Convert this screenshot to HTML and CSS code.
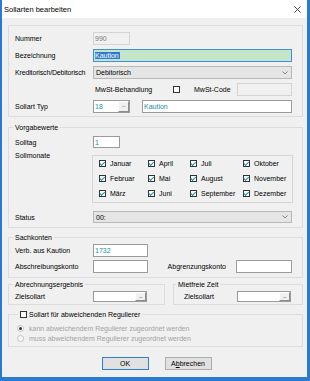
FILE: index.html
```html
<!DOCTYPE html>
<html lang="de">
<head>
  <meta charset="UTF-8">
  <meta name="viewport" content="width=device-width, initial-scale=1.0">
  <title>Sollarten bearbeiten</title>
  <link rel="stylesheet" href="styles.css">
</head>
<body>

<div class="window">
  <header class="titlebar">
    <span>Sollarten bearbeiten</span>
    <svg class="close" width="7" height="7" viewBox="0 0 7 7">
      <path d="M0.3 0.3 L6.7 6.7 M6.7 0.3 L0.3 6.7" stroke="#222" stroke-width="0.8" fill="none"/>
    </svg>
  </header>

  <div class="dialog">

    <div class="group group-main">
      <div class="row">
        <label>Nummer</label>
        <div class="field disabled w-num">990</div>
      </div>
      <div class="row">
        <label>Bezeichnung</label>
        <div class="field active grow"><span class="selected">Kaution</span></div>
      </div>
      <div class="row">
        <label class="tight">Kreditorisch/Debitorisch</label>
        <div class="select grow">
          <span>Debitorisch</span>
          <svg class="chevron" width="6" height="4" viewBox="0 0 6 4"><polyline points="0.5,0.5 3,3 5.5,0.5" fill="none" stroke="#666" stroke-width="0.8"/></svg>
        </div>
      </div>
      <div class="row">
        <span class="spacer"></span>
        <span class="mwst-label">MwSt-Behandlung</span>
        <span class="check"></span>
        <span class="mwst-code">MwSt-Code</span>
        <div class="field disabled grow"></div>
      </div>
      <div class="row">
        <label>Sollart Typ</label>
        <div class="field w-num teal">18<span class="dots">...</span></div>
        <div class="field grow teal typ-name">Kaution</div>
      </div>
    </div>

    <fieldset class="group group-defaults">
      <legend>Vorgabewerte</legend>
      <div class="row row-small">
        <label>Solltag</label>
        <div class="field w-day teal">1</div>
      </div>
      <div class="months-row">
        <label>Sollmonate</label>
        <div class="months">
          <span class="month"><span class="check on"></span>Januar</span>
          <span class="month"><span class="check on"></span>April</span>
          <span class="month"><span class="check on"></span>Juli</span>
          <span class="month"><span class="check on"></span>Oktober</span>
          <span class="month"><span class="check on"></span>Februar</span>
          <span class="month"><span class="check on"></span>Mai</span>
          <span class="month"><span class="check on"></span>August</span>
          <span class="month"><span class="check on"></span>November</span>
          <span class="month"><span class="check on"></span>März</span>
          <span class="month"><span class="check on"></span>Juni</span>
          <span class="month"><span class="check on"></span>September</span>
          <span class="month"><span class="check on"></span>Dezember</span>
        </div>
      </div>
      <div class="row row-small status-row">
        <label>Status</label>
        <div class="select grow">
          <span>00:</span>
          <svg class="chevron" width="6" height="4" viewBox="0 0 6 4"><polyline points="0.5,0.5 3,3 5.5,0.5" fill="none" stroke="#666" stroke-width="0.8"/></svg>
        </div>
      </div>
    </fieldset>

    <fieldset class="group group-accounts">
      <legend>Sachkonten</legend>
      <div class="row">
        <label>Verb. aus Kaution</label>
        <div class="field w-acc teal">1732</div>
      </div>
      <div class="row row-tight">
        <label>Abschreibungskonto</label>
        <div class="field w-acc"></div>
        <span class="side-label">Abgrenzungskonto</span>
        <div class="field w-acc2"></div>
      </div>
    </fieldset>

    <div class="split">
      <fieldset class="group group-result">
        <legend>Abrechnungsergebnis</legend>
        <div class="row row-mini">
          <label>Zielsollart</label>
          <div class="field w-target"><span class="dots">...</span></div>
        </div>
      </fieldset>
      <fieldset class="group group-free">
        <legend>Mietfreie Zeit</legend>
        <div class="row row-mini">
          <label class="short">Zielsollart</label>
          <div class="field w-target"><span class="dots">...</span></div>
        </div>
      </fieldset>
    </div>

    <fieldset class="group group-reg">
      <legend><span class="check"></span>Sollart für abweichenden Regulierer</legend>
      <div class="option"><span class="radio on"></span>kann abweichendem Regulierer zugeordnet werden</div>
      <div class="option"><span class="radio"></span>muss abweichendem Regulierer zugeordnet werden</div>
    </fieldset>

    <div class="buttons">
      <button class="btn default">OK</button>
      <button class="btn">A<u>b</u>brechen</button>
    </div>

  </div>
</div>

</body>
</html>
```

FILE: styles.css
```css
body {
  margin: 0;
  width: 310px;
  height: 381px;
  overflow: hidden;
  font-family: "Liberation Sans", Arial, sans-serif;
  font-size: 7px;
  color: #000;
}
.window {
  box-sizing: border-box;
  width: 310px;
  height: 381px;
  background: #f0f0f0;
  border: solid #2a7ad2;
  border-width: 0 3px 4px 2px;
  display: flex;
  flex-direction: column;
}
.titlebar {
  flex: none;
  height: 18px;
  background: #fff;
  display: flex;
  align-items: center;
  justify-content: space-between;
  padding: 0 6px 0 2px;
  font-size: 7.5px;
}
.dialog {
  flex: 1;
  display: flex;
  flex-direction: column;
  padding: 7px 4px 0 6px;
}

/* group boxes */
.group {
  margin: 0;
  min-width: 0;
  border: 1px solid #dcdcdc;
  padding: 6px 10px 3px 6px;
}
.group legend {
  padding: 0 2px;
  margin-left: -2px;
  line-height: 9px;
}
.group-defaults {
  margin-top: 6px;
  padding-top: 4px;
  padding-bottom: 4px;
}
.group-accounts {
  margin-top: 5px;
  padding-top: 2px;
  padding-bottom: 4px;
}
.split {
  display: flex;
  gap: 8px;
  margin-top: 2px;
}
.group-result {
  flex: 0 0 157px;
  box-sizing: border-box;
  padding: 2px 8px 2px 6px;
}
.group-free {
  flex: 1;
  padding: 2px 12px 2px 4px;
}
.group-free .row {
  margin-left: 6px;
}
.group-reg {
  margin-top: 5px;
  padding: 5px 10px 3px 6px;
}
.group-reg legend {
  margin-left: 3px;
  display: flex;
  align-items: center;
  gap: 2px;
}

/* rows */
.row {
  display: flex;
  align-items: center;
  height: 13px;
}
.row + .row {
  margin-top: 4px;
}
.row label {
  flex: none;
  width: 78px;
  white-space: nowrap;
}
.row label.tight {
  letter-spacing: -0.15px;
}
.row label.short {
  width: 53px;
}
.row-small {
  height: 12px;
}
.row-tight {
  margin-top: 3px !important;
}
.row-mini {
  height: 11px;
}
.status-row {
  margin-top: 8px;
}
.spacer {
  width: 80px;
  flex: none;
}
.mwst-label {
  width: 78px;
  flex: none;
}
.mwst-code {
  width: 43px;
  margin-left: 14px;
  flex: none;
}
.side-label {
  margin-left: auto;
  margin-right: 10px;
}

/* inputs */
.field {
  box-sizing: border-box;
  height: 100%;
  border: 1px solid #9a9a9a;
  background: #fff;
  padding-left: 1px;
  display: flex;
  align-items: center;
  white-space: nowrap;
  flex: none;
}
.field.grow,
.select.grow {
  flex: 1;
}
.field.disabled {
  background: #f0f0f0;
  border-color: #d4d4d4;
  color: #7a7a7a;
}
.field.active {
  background: #c5e6c6;
  border-color: #3d8fe0;
}
.selected {
  background: #2f78d0;
  color: #fff;
  padding-right: 1px;
}
.teal {
  color: #1a90a3;
}
.w-num { width: 37px; }
.w-day { width: 27px; }
.w-acc { width: 55px; }
.w-acc2 { width: 56px; }
.w-target { width: 54px; }
.typ-name {
  margin-left: 12px;
}
.dots {
  margin-left: auto;
  box-sizing: border-box;
  width: 11px;
  height: 100%;
  background: #f0f0f0;
  border: 1px solid;
  border-color: #fff #8c8c8c #8c8c8c #fff;
  color: #222;
  font-size: 6px;
  line-height: 6px;
  text-align: center;
  letter-spacing: -0.5px;
}
.select {
  box-sizing: border-box;
  height: 100%;
  border: 1px solid #b8b8b8;
  background: #e5e5e5;
  padding: 0 3px 0 2px;
  display: flex;
  align-items: center;
  justify-content: space-between;
}

/* months */
.months-row {
  display: flex;
  align-items: flex-start;
  margin-top: 3px;
}
.months-row label {
  flex: none;
  width: 78px;
  line-height: 9px;
}
.months {
  flex: 1;
  box-sizing: border-box;
  height: 48px;
  margin: 4px -1px 0 -1px;
  border: 1px solid #d5d5d5;
  padding: 2px 0 0 6px;
  display: grid;
  grid-template-columns: 49px 42px 53px auto;
  grid-auto-rows: 11px;
  row-gap: 4px;
}
.month {
  display: flex;
  align-items: center;
  gap: 4px;
  white-space: nowrap;
}

/* checkboxes and radios */
.check {
  flex: none;
  box-sizing: border-box;
  width: 7px;
  height: 7px;
  border: 1px solid #333;
  background: #fff;
  display: flex;
  align-items: center;
  justify-content: center;
}
.check.on::after {
  content: "";
  width: 1.5px;
  height: 3.5px;
  border: solid #1a90a3;
  border-width: 0 1.2px 1.2px 0;
  transform: translateY(-0.5px) rotate(45deg);
}
.option {
  display: flex;
  align-items: center;
  gap: 5px;
  height: 9px;
  margin-left: 2px;
  color: #a3a3a3;
  white-space: nowrap;
}
.option + .option {
  margin-top: 1px;
}
.radio {
  flex: none;
  box-sizing: border-box;
  width: 7px;
  height: 7px;
  border: 1px solid #c2c2c2;
  border-radius: 50%;
  background: #fbfbfb;
  display: flex;
  align-items: center;
  justify-content: center;
}
.radio.on::after {
  content: "";
  width: 3px;
  height: 3px;
  border-radius: 50%;
  background: #2b3a40;
}

/* buttons */
.buttons {
  display: flex;
  justify-content: center;
  gap: 16px;
  margin-top: 10px;
  padding-left: 2px;
}
.btn {
  box-sizing: border-box;
  width: 47px;
  height: 13px;
  padding: 0;
  border: 1px solid #adadad;
  background: #e1e1e1;
  font-family: inherit;
  font-size: 7px;
  color: #000;
}
.btn.default {
  border-color: #2f7fd6;
}
```
